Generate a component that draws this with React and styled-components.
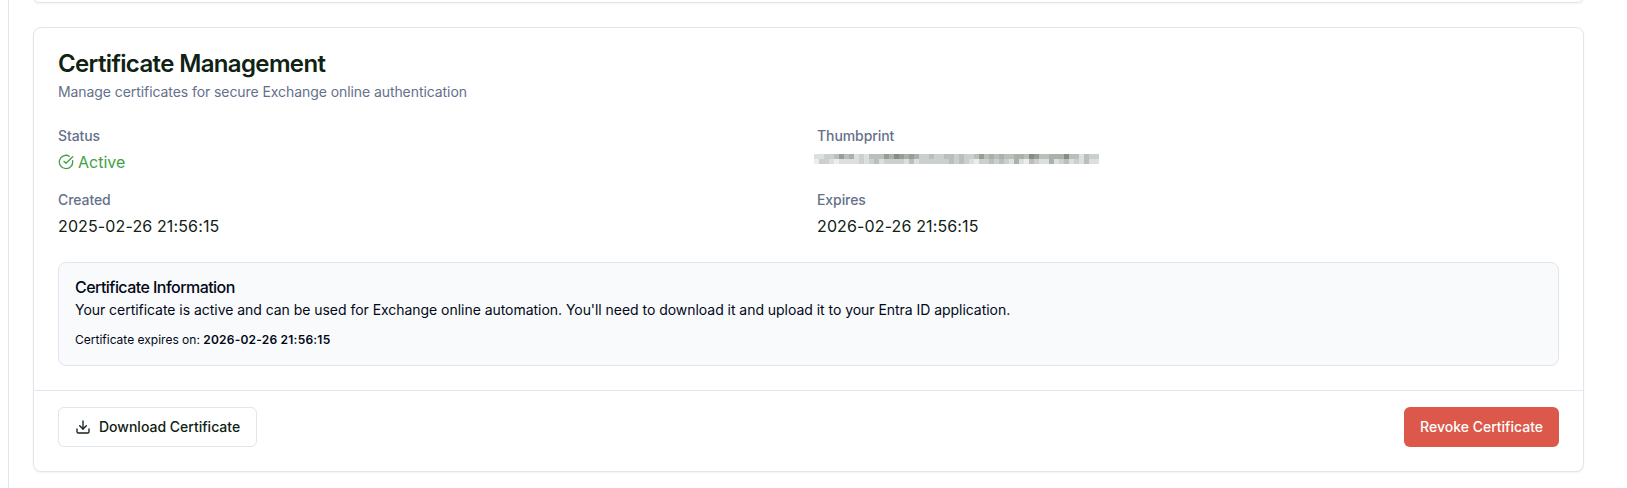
import React from 'react';
import styled, { createGlobalStyle } from 'styled-components';
import { CircleCheckBig, Download } from 'lucide-react';

const Global = createGlobalStyle`
  *, *::before, *::after { box-sizing: border-box; }
  body { margin: 0; background: #fff; color: #0f2213; font-family: Inter, "Liberation Sans", sans-serif; font-size: 16px; line-height: 24px; }
  h3, h5, p { margin: 0; }
`;
const Page = styled.main`
  display: flex; flex-direction: column; gap: 24px; height: 488px; margin-left: 8px;
  padding: 0 43px 0 24px; border-left: 1px solid #e2e5ee; overflow: hidden;
`;
const Panel = styled.section`
  flex: none; border: 1px solid #e2e5ee; border-radius: 8px; background: #fff;
  box-shadow: 0 1px 2px rgba(0, 0, 0, 0.05);
`;
const PreviousPanel = styled(Panel)`height: 12px; margin-top: -9px;`;
const Header = styled.header`display: flex; flex-direction: column; gap: 6px; padding: 24px;`;
const Title = styled.h3`font-size: 24px; line-height: 24px; font-weight: 600; letter-spacing: -0.64px;`;
const Description = styled.p`font-size: 14px; line-height: 20px; letter-spacing: -0.075px; color: #65708a;`;
const Body = styled.div`display: flex; flex-direction: column; gap: 24px; padding: 0 24px 24px;`;
const Fields = styled.dl`display: grid; grid-template-columns: 743px 1fr; gap: 16px; margin: 0;`;
const Field = styled.div`display: flex; flex-direction: column; gap: 4px;`;
const Label = styled.dt`font-size: 14px; line-height: 20px; font-weight: 500; letter-spacing: -0.08px; color: #65708a;`;
const Value = styled.dd`
  display: flex; align-items: center; gap: 4px; height: 24px; margin: 0;
  color: ${(p) => (p.$active ? '#43a047' : 'inherit')};
`;
const DateValue = styled(Value)`letter-spacing: 0.13px;`;
const Redacted = styled.div`
  display: grid; grid-template-columns: repeat(57, 5px); grid-auto-rows: 5px; margin: -6px 0 0 -3px;
`;
const Block = styled.i`background: ${(p) => p.$tone};`;
const Notice = styled.div`padding: 16px; border: 1px solid #e2e5ee; border-radius: 8px; background: #f8fafc; color: #020817;`;
const NoticeTitle = styled.h5`margin-bottom: 4px; font-size: 16px; line-height: 16px; font-weight: 500; letter-spacing: -0.55px;`;
const NoticeText = styled.p`font-size: 14px; line-height: 22.75px; letter-spacing: -0.04px;`;
const NoticeExpiry = styled.p`
  margin-top: 8px; font-size: 12px; line-height: 19.5px;
  strong { font-weight: 600; letter-spacing: 0.22px; }
`;
const Footer = styled.footer`display: flex; justify-content: space-between; padding: 16px 24px 24px; border-top: 1px solid #e2e8f0;`;
const Button = styled.button`
  display: inline-flex; align-items: center; justify-content: center; gap: 8px; height: 40px;
  padding: 0 16px; border: ${(p) => (p.$danger ? '0' : '1px solid #e2e5ee')}; border-radius: 6px;
  background: ${(p) => (p.$danger ? '#db584a' : '#fff')}; color: ${(p) => (p.$danger ? '#fff' : '#0f2213')};
  font: 500 14px/20px Inter, "Liberation Sans", sans-serif;
`;

// Tones run from dark (a) to light (g); each letter is one block of the redacted value.
const palette = { a: '#848e86', b: '#969f97', c: '#a8b1aa', d: '#b9c0bb', e: '#cbd0cc', f: '#dcdfdd', g: '#ededed' };
const mosaic = [
  ['ffeedbdcfefddd', 'bcabcbc', 'eedeeddedeed', 'bdcdcddccd', 'abddccca', 'ddfdee'].join(''),
  ['geefgffffefedf', 'eeeefdf', 'eeeeeededefg', 'eededefcfg', 'deffcfed', 'fefdff'].join(''),
];

export default function App() {
  return (
    <>
      <Global />
      <Page>
        <PreviousPanel />
        <Panel>
          <Header>
            <Title>Certificate Management</Title>
            <Description>Manage certificates for secure Exchange online authentication</Description>
          </Header>
          <Body>
            <Fields>
              <Field><Label>Status</Label><Value $active><CircleCheckBig size={16} />Active</Value></Field>
              <Field>
                <Label>Thumbprint</Label>
                <Value>
                  <Redacted>
                    {mosaic.flatMap((row, y) => [...row].map((key, x) => <Block key={`${x}-${y}`} $tone={palette[key]} />))}
                  </Redacted>
                </Value>
              </Field>
              <Field><Label>Created</Label><DateValue>2025-02-26 21:56:15</DateValue></Field>
              <Field><Label>Expires</Label><DateValue>2026-02-26 21:56:15</DateValue></Field>
            </Fields>
            <Notice>
              <NoticeTitle>Certificate Information</NoticeTitle>
              <NoticeText>Your certificate is active and can be used for Exchange online automation. You'll need to download it and upload it to your Entra ID application.</NoticeText>
              <NoticeExpiry>Certificate expires on: <strong>2026-02-26 21:56:15</strong></NoticeExpiry>
            </Notice>
          </Body>
          <Footer>
            <Button><Download size={16} />Download Certificate</Button>
            <Button $danger>Revoke Certificate</Button>
          </Footer>
        </Panel>
      </Page>
    </>
  );
}
